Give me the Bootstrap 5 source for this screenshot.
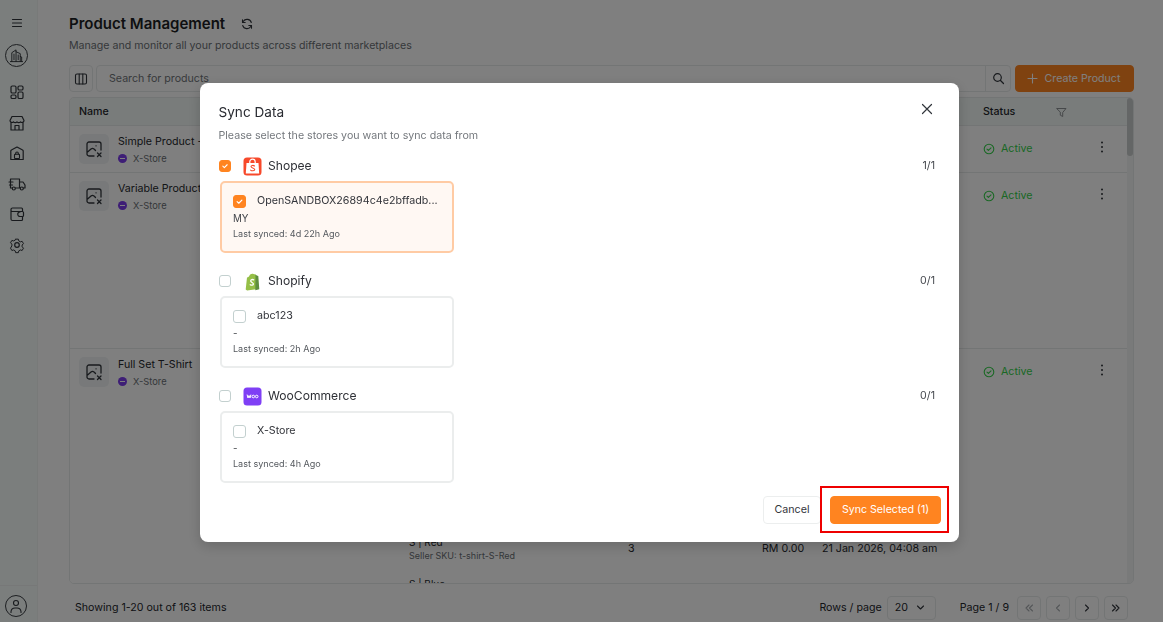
<!DOCTYPE html>
<html lang="en">
<head>
<meta charset="utf-8">
<title>Product Management</title>
<link href="https://cdn.jsdelivr.net/npm/bootstrap@5.3.0/dist/css/bootstrap.min.css" rel="stylesheet">
<style>
html,body{height:100%;overflow:hidden}
body{font-family:Inter,"Liberation Sans",sans-serif;color:#23252b;background:#fff;font-size:10.65px}
.app-shell{height:622px}
.side-rail{width:38px;background:#f6fcfa;border-right:1px solid #f1f4f3;flex:none}
.rail-ham{height:46px;display:flex;align-items:center;justify-content:center;padding-right:4px}
.rail-logo{width:23px;height:23px;border:1px solid #3b3f44;border-radius:50%;margin:-2px 0 0 4.500px;display:flex;align-items:center;justify-content:center}
.rail-list{margin-top:15px;gap:10.600px;align-items:center;padding-right:4px}
.rail-foot{border-top:1px solid #eef1f0;height:37px;padding:9px 0 0 5px}
.rail-user{width:22px;height:22px;border:1px solid #3b3f44;border-radius:50%;display:flex;align-items:center;justify-content:center}
.ico{fill:none;stroke:#31353b;stroke-width:1.6;stroke-linecap:round;stroke-linejoin:round;display:block}
.main-pane{padding:0 29px 0 31px;min-width:0}
.pg-title{font-size:15px;font-weight:600;margin:14px 0 0;line-height:19px;color:#1d1f24}
.pg-sub{font-size:10.640px;color:#6b7075;margin:6px 0 0;line-height:14px}
.tool-row{margin-top:12px;height:27px;gap:3px}
.sq-btn{width:24px;height:27px;border:1px solid #e7eaea;border-radius:4px;background:#fff;padding:0;display:flex;align-items:center;justify-content:center}
.search-wrap{border:1px solid #e7eaea;border-radius:4px;height:27px;flex:1;display:flex;align-items:center;justify-content:space-between;padding-left:12px;color:#6f7479;font-size:10.650px}
.search-end{width:25px;height:25px;border-left:1px solid #e7eaea;display:flex;align-items:center;justify-content:center}
.create-btn{background:#ff8420;border:1px solid #ff8420;color:#fff;border-radius:4px;font-size:10.650px;height:27px;width:119px;margin-left:1px;padding:0 2px 0 0;display:flex;align-items:center;justify-content:center;gap:7px}
.tbl-box{margin-top:5px;height:488px;border:1px solid #e7eaea;border-radius:5px;overflow:hidden;display:flex}
.tbl-scroll{flex:1;min-width:0;overflow:hidden}
.track-bar{width:6px;background:#f2f4f4;flex:none}
.track-thumb{height:58px;background:#c8cccc;border-radius:3px}
.ptbl{table-layout:fixed;width:1058px;margin:0;font-size:10.650px;color:#25272c}
.ptbl th{background:#f2f8f6;font-weight:500;height:27px;padding:2px 9px 0;border-bottom:1px solid #e7eaea;vertical-align:middle;font-size:10.650px}
.ptbl td{padding:8px 9px 0;border-bottom:1px solid #e7eaea;vertical-align:top;background:#fff;white-space:nowrap}
.row-a{height:47px}.row-b{height:176px}
.name-cell{display:flex;gap:9px}
.img-tile{width:30px;height:30px;border-radius:5px;background:#f0f3f4;display:flex;align-items:center;justify-content:center;flex:none}
.name-text{line-height:14px;white-space:nowrap;font-size:10.650px;margin-top:1px}
.store-line{display:flex;align-items:center;gap:6px;color:#6a6f74;font-size:9.300px;margin-top:3px;line-height:14px}
.store-dot{width:9px;height:9px;border-radius:50%;background:#7c3cec;display:flex;align-items:center;justify-content:center}
.store-dot::after{content:"";width:5px;height:1.5px;background:#fff}
.status-line{display:flex;align-items:center;gap:6px;color:#35d14a;font-size:10.650px;line-height:14px;margin-top:8px}
.status-line .ico{stroke:#35d14a}
.ptbl td.kebab-cell{padding:15px 24px 0 0}
.kebab-cell svg{margin:0 0 0 auto}
.ptbl td.var-stack{padding-top:186px;font-size:10px;line-height:14px}
.var-sku{color:#6a6f74;font-size:9px;white-space:nowrap}
.var-gap{margin-top:14px}
.ptbl td.big-cell{padding-top:192px}
.foot-row{height:38px;padding:9px 6px 0;font-size:10.650px}
.foot-sel{width:49px;height:24px;border:1px solid #e7eaea;border-radius:4px;display:flex;align-items:center;justify-content:space-between;padding:0 10px 0 7px;margin:0 24px 0 5px;flex:none}
.pg-btn{width:24px;height:24px;border:1px solid #e7eaea;border-radius:4px;display:flex;align-items:center;justify-content:center}
.pg-btn.off .ico{stroke:#a9adb1}
/* modal */
.sync-dialog{max-width:759px;width:759px;margin:83px 0 0 200px}
.sync-content{border:0;border-radius:8px;height:459px;padding:0 18px 0 18.500px;box-shadow:0 4px 14px rgba(0,0,0,.18);display:block}
.sync-title{font-size:13.600px;font-weight:400;line-height:18px;margin:0;padding-top:20px;color:#282a30}
.sync-sub{font-size:10.650px;color:#74787d;line-height:14px;margin:8px 0 13px}
.close-x{position:absolute;right:26px;top:20px;background:none;border:0;padding:0;width:12px;height:12px}
.mkt-head{height:20px;margin-top:6px;display:flex;align-items:center}
.sync-sub + .mkt-head{margin-top:0}
.mkt-head .tick{margin:0 12px 0 0}
.mkt-name{font-size:12.100px;margin-left:6px;color:#2e3036}
.mkt-count{margin-left:auto;margin-right:6px;font-size:10.650px;color:#46494f}
.tick{appearance:none;width:12.500px;height:12.500px;border:1.500px solid #c3d0cf;border-radius:3px;background:#fff;flex:none;display:block;margin:0}
.tick:checked{background:#ff8420 url("data:image/svg+xml,%3Csvg xmlns='http://www.w3.org/2000/svg' viewBox='0 0 12 12'%3E%3Cpath d='M3.400 6.200l1.800 1.700 3.400-3.400' fill='none' stroke='%23fff' stroke-width='1.300' stroke-linecap='round' stroke-linejoin='round'/%3E%3C/svg%3E") center/100% no-repeat;border-color:#ff8420}
.shop-box{margin:4.500px 0 18.500px 1.500px;width:234px;height:72px;border:2px solid #ebeded;border-radius:5px;padding:12px 12px 0 11px}
.shop-box.on{background:#fff8f3;border-color:#ffcba4}
.shop-top{display:flex;align-items:center;height:14px}
.shop-top .tick{margin-right:11.500px}
.shop-name{font-size:10.700px;color:#33353b;white-space:nowrap}
.shop-region{font-size:9.800px;color:#44474c;line-height:14px;margin-top:3px}
.shop-sync{font-size:9.050px;color:#55595e;line-height:14px;margin-top:1px;white-space:nowrap}
.sync-foot{position:absolute;right:18px;bottom:18px;display:flex;gap:9px;align-items:center}
.cancel-btn{width:58px;height:28px;background:#fff;border:1px solid #eceeee;border-radius:4px;font-size:10.700px;color:#33353b;padding:0}
.go-wrap{position:relative}
.go-btn{width:111px;height:28px;background:#ff8420;border:1px solid #ff8420;color:#fff;border-radius:4px;font-size:10.650px;padding:0;display:block}
.red-mark{position:absolute;left:-10px;right:-8px;top:-10px;bottom:-9px;border:2px solid #ee0000;pointer-events:none}
</style>
</head>
<body>
<div class="app-shell d-flex">
  <aside class="side-rail d-flex flex-column">
    <div class="rail-ham"><svg class="ico" width="12" height="12" viewBox="0 0 12 12"><path d="M1.500 2.500h9M1.500 6h9M1.500 9.500h9" stroke-width="1.100"/></svg></div>
    <div class="rail-logo"><svg class="ico" width="15" height="15" viewBox="0 0 16 16"><path d="M1.500 14.500h13M3 14.500V5l4.500-3v12.500M7.500 4l4.500 2v8.500M12 9l1.500.6v4.900M5.300 6.500v6M9.800 7.500v5" stroke-width="1"/></svg></div>
    <div class="rail-list d-flex flex-column">
      <svg class="ico" width="20" height="20" viewBox="0 0 20 20"><rect x="4" y="4" width="5" height="7" rx="1.300" stroke-width="1.200"/><rect x="11" y="4" width="5" height="4" rx="1.300" stroke-width="1.200"/><rect x="4" y="13" width="5" height="3.500" rx="1.300" stroke-width="1.200"/><rect x="11" y="10" width="5" height="6.500" rx="1.300" stroke-width="1.200"/></svg>
      <svg class="ico" width="20" height="20" viewBox="0 0 20 20"><path d="M5 3.500h10l2 4a2 2 0 0 1-3.500 1.300 2.400 2.400 0 0 1-3.500 0 2.400 2.400 0 0 1-3.500 0A2 2 0 0 1 3 7.500zM4 9.500v7.500h12V9.500M8 17v-4.500h4V17" stroke-width="1.200"/></svg>
      <svg class="ico" width="20" height="20" viewBox="0 0 20 20"><path d="M3.800 16.500V8a1 1 0 0 1 .6-.9L10 4l5.600 3.100a1 1 0 0 1 .6.900v8.500z" stroke-width="1.200"/><rect x="7.500" y="11.300" width="5" height="4.200" rx=".6" stroke-width="1.100"/><path d="M8.700 11.300v-1a1.300 1.300 0 0 1 2.600 0v1" stroke-width="1.100"/></svg>
      <svg class="ico" width="20" height="20" viewBox="0 0 20 20"><path d="M5 14H3.500V5h9v9H8.500M12.500 8H16l2 3v3h-1.500M12.500 14h.5M2 8h4M2.500 11h3" stroke-width="1.200"/><circle cx="6.800" cy="14.500" r="1.500" stroke-width="1.200"/><circle cx="14.800" cy="14.500" r="1.500" stroke-width="1.200"/></svg>
      <svg class="ico" width="20" height="20" viewBox="0 0 20 20"><path d="M15.500 7.500V5a1 1 0 0 0-1-1h-9A1.500 1.500 0 0 0 4 5.500V15a1.500 1.500 0 0 0 1.500 1.500h9a1 1 0 0 0 1-1v-2.500M4 6.500c0 .7.600 1 1.200 1h10.300a1 1 0 0 1 1 1v3a1 1 0 0 1-1 1H13a2 2 0 0 1 0-4.500" stroke-width="1.200"/></svg>
      <svg class="ico" width="20" height="20" viewBox="0 0 20 20"><circle cx="10" cy="10" r="2.300" stroke-width="1.200"/><path d="M8.500 3.500h3l.5 2 1.700 1 2-.6 1.500 2.600-1.500 1.500v2l1.500 1.500-1.500 2.600-2-.6-1.700 1-.5 2h-3l-.5-2-1.700-1-2 .6-1.500-2.600L4.300 11V9L2.800 7.500l1.500-2.600 2 .6 1.700-1z" stroke-width="1.100" transform="translate(1 1) scale(.9)"/></svg>
    </div>
    <div class="rail-foot mt-auto"><div class="rail-user"><svg class="ico" width="16" height="16" viewBox="0 0 16 16"><circle cx="8" cy="5" r="2.500" stroke-width="1.100"/><path d="M3 14.500v-1a4 4 0 0 1 4-3.500h2a4 4 0 0 1 4 3.500v1" stroke-width="1.100"/></svg></div></div>
  </aside>
  <main class="main-pane flex-grow-1 d-flex flex-column">
    <div class="d-flex align-items-center">
      <h1 class="pg-title">Product Management</h1>
      <svg class="ico ms-3 rf-ico" style="margin-top:14px" width="12" height="12" viewBox="0 0 12 12"><path d="M10.300 4.500A4.500 4.500 0 0 0 2.200 3.500L1.500 4.500M1.700 7.500a4.500 4.500 0 0 0 8.100 1l.7-1M1.500 1.800v2.700h2.700M10.500 10.200V7.500H7.800" stroke-width="1.100"/></svg>
    </div>
    <p class="pg-sub">Manage and monitor all your products across different marketplaces</p>
    <div class="tool-row d-flex">
      <div class="sq-btn"><svg class="ico" width="14" height="14" viewBox="0 0 14 14"><rect x="1.500" y="2" width="11" height="10" rx="1.500" stroke-width="1.100"/><path d="M5.200 2v10M8.800 2v10" stroke-width="1.100"/></svg></div>
      <div class="search-wrap"><span>Search for products</span><span class="search-end"><svg class="ico" width="13" height="13" viewBox="0 0 13 13"><circle cx="5.500" cy="5.500" r="3.800" stroke-width="1.200"/><path d="M8.500 8.500l3 3" stroke-width="1.200"/></svg></span></div>
      <button class="create-btn" type="button"><svg class="ico" width="11" height="11" viewBox="0 0 11 11"><path d="M5.500 1v9M1 5.500h9" style="stroke:#fff" stroke-width="1.100"/></svg>Create Product</button>
    </div>
    <div class="tbl-box">
      <div class="tbl-scroll">
        <table class="table ptbl">
          <colgroup><col style="width:330px"><col style="width:219px"><col style="width:134px"><col style="width:60px"><col style="width:161px"><col style="width:118px"><col style="width:36px"></colgroup>
          <thead><tr><th>Name</th><th></th><th></th><th></th><th></th><th><div class="d-flex align-items-center justify-content-between pe-3"><span>Status</span><svg class="ico" width="11" height="11" viewBox="0 0 11 11"><path d="M1 1.500h9L6.700 5.500v4l-2.400-1.300V5.500z" style="stroke:#8d9194" stroke-width="1"/></svg></div></th><th></th></tr></thead>
          <tbody>
            <tr class="row-a"><td><div class="name-cell"><div class="img-tile"><svg class="ico" width="18" height="18" viewBox="0 0 18 18"><path d="M9 16H4a2 2 0 0 1-2-2V4a2 2 0 0 1 2-2h10a2 2 0 0 1 2 2v6M2 12.500L6 9c1.500-1.200 3-.5 4.500 1.500M11 5.800h.1M12.500 13l3.500 3.500M16 13l-3.500 3.500" stroke-width="1.300"/></svg></div><div><div class="name-text">Simple Product -</div><div class="store-line"><span class="store-dot"></span>X-Store</div></div></div></td><td></td><td></td><td></td><td></td><td><div class="status-line"><svg class="ico" width="12" height="12" viewBox="0 0 12 12"><circle cx="6" cy="6" r="4.800" stroke-width="1.100"/><path d="M4 6.100l1.400 1.300L8 4.800" stroke-width="1.100"/></svg>Active</div></td><td class="kebab-cell"><svg class="ico" width="4" height="12" viewBox="0 0 4 12"><path d="M2 1.500h.01M2 6h.01M2 10.500h.01" stroke-width="2"/></svg></td></tr>
            <tr class="row-b"><td><div class="name-cell"><div class="img-tile"><svg class="ico" width="18" height="18" viewBox="0 0 18 18"><path d="M9 16H4a2 2 0 0 1-2-2V4a2 2 0 0 1 2-2h10a2 2 0 0 1 2 2v6M2 12.500L6 9c1.500-1.200 3-.5 4.500 1.500M11 5.800h.1M12.500 13l3.500 3.500M16 13l-3.500 3.500" stroke-width="1.300"/></svg></div><div><div class="name-text">Variable Product</div><div class="store-line"><span class="store-dot"></span>X-Store</div></div></div></td><td></td><td></td><td></td><td></td><td><div class="status-line"><svg class="ico" width="12" height="12" viewBox="0 0 12 12"><circle cx="6" cy="6" r="4.800" stroke-width="1.100"/><path d="M4 6.100l1.400 1.300L8 4.800" stroke-width="1.100"/></svg>Active</div></td><td class="kebab-cell"><svg class="ico" width="4" height="12" viewBox="0 0 4 12"><path d="M2 1.500h.01M2 6h.01M2 10.500h.01" stroke-width="2"/></svg></td></tr>
            <tr><td><div class="name-cell"><div class="img-tile"><svg class="ico" width="18" height="18" viewBox="0 0 18 18"><path d="M9 16H4a2 2 0 0 1-2-2V4a2 2 0 0 1 2-2h10a2 2 0 0 1 2 2v6M2 12.500L6 9c1.500-1.200 3-.5 4.500 1.500M11 5.800h.1M12.500 13l3.500 3.500M16 13l-3.500 3.500" stroke-width="1.300"/></svg></div><div><div class="name-text">Full Set T-Shirt</div><div class="store-line"><span class="store-dot"></span>X-Store</div></div></div></td><td class="var-stack"><div>S | Red</div><div class="var-sku">Seller SKU: t-shirt-S-Red</div><div class="var-gap">S | Blue</div></td><td class="big-cell">3</td><td class="big-cell">RM 0.00</td><td class="big-cell">21 Jan 2026, 04:08 am</td><td><div class="status-line"><svg class="ico" width="12" height="12" viewBox="0 0 12 12"><circle cx="6" cy="6" r="4.800" stroke-width="1.100"/><path d="M4 6.100l1.400 1.300L8 4.800" stroke-width="1.100"/></svg>Active</div></td><td class="kebab-cell"><svg class="ico" width="4" height="12" viewBox="0 0 4 12"><path d="M2 1.500h.01M2 6h.01M2 10.500h.01" stroke-width="2"/></svg></td></tr>
          </tbody>
        </table>
      </div>
      <div class="track-bar"><div class="track-thumb"></div></div>
    </div>
    <div class="foot-row d-flex align-items-center">
      <span>Showing 1-20 out of 163 items</span>
      <div class="ms-auto d-flex align-items-center">
        <span>Rows / page</span>
        <div class="foot-sel"><span>20</span><svg class="ico" width="9" height="9" viewBox="0 0 9 9"><path d="M1.500 3l3 3 3-3" stroke-width="1.100"/></svg></div>
        <span class="me-2">Page 1 / 9</span>
        <div class="d-flex" style="gap:5px">
          <div class="pg-btn off"><svg class="ico" width="10" height="10" viewBox="0 0 10 10"><path d="M5 2L2 5l3 3M8.500 2l-3 3 3 3" stroke-width="1.100"/></svg></div>
          <div class="pg-btn off"><svg class="ico" width="10" height="10" viewBox="0 0 10 10"><path d="M6.500 2l-3 3 3 3" stroke-width="1.100"/></svg></div>
          <div class="pg-btn"><svg class="ico" width="10" height="10" viewBox="0 0 10 10"><path d="M3.500 2l3 3-3 3" stroke-width="1.100"/></svg></div>
          <div class="pg-btn"><svg class="ico" width="10" height="10" viewBox="0 0 10 10"><path d="M1.500 2l3 3-3 3M5 2l3 3-3 3" stroke-width="1.100"/></svg></div>
        </div>
      </div>
    </div>
  </main>
</div>

<div class="modal-backdrop show"></div>
<div class="modal d-block" tabindex="-1" role="dialog">
  <div class="modal-dialog sync-dialog">
    <div class="modal-content sync-content">
      <h2 class="sync-title">Sync Data</h2>
      <button class="close-x" type="button" aria-label="Close"><svg class="ico" width="12" height="12" viewBox="0 0 12 12"><path d="M1.500 1.500l9 9M10.500 1.500l-9 9" stroke-width="1.200"/></svg></button>
      <p class="sync-sub">Please select the stores you want to sync data from</p>

      <div class="mkt-head"><input class="tick" type="checkbox" checked aria-label="Shopee">
        <svg width="19" height="19" viewBox="0 0 19 19"><rect x=".5" y=".5" width="18" height="18" rx="3.500" fill="#f7492b"/><path d="M3.500 6h12l.7 10.500H2.800z" fill="#fff"/><path d="M6.800 6.200V4.800a2.700 2.700 0 0 1 5.400 0v1.400" fill="none" stroke="#fff" stroke-width="1.200"/><path d="M11.500 9c-.8-.8-3.500-.9-3.500.6 0 1.700 3.700 1 3.700 3 0 1.500-3 1.500-4.100.5" fill="none" stroke="#f7492b" stroke-width="1.100" stroke-linecap="round"/></svg>
        <span class="mkt-name">Shopee</span><span class="mkt-count">1/1</span></div>
      <div class="shop-box on">
        <div class="shop-top"><input class="tick" type="checkbox" checked aria-label="OpenSANDBOX"><span class="shop-name">OpenSANDBOX26894c4e2bffadb...</span></div>
        <div class="shop-region">MY</div>
        <div class="shop-sync">Last synced: 4d 22h Ago</div>
      </div>

      <div class="mkt-head"><input class="tick" type="checkbox" aria-label="Shopify">
        <svg width="19" height="19" viewBox="0 0 19 19"><path d="M4 5.500c1.500-.4 2-1 2.500-2 .6-1.300 2.400-2.300 4-1.500l2 .6 1.200 1.400 1.300 13-10.900 1.500-1.400-1z" fill="#95bf47"/><path d="M12.500 2.600l1.200 1 1.600.3 1 13.400-4 .9z" fill="#5e8e3e"/><path d="M10.700 7.800c-1.300-.6-3-.2-3 1.200s2.700 1.500 2.700 3c0 1.400-1.800 1.500-3.200.7" fill="none" stroke="#fff" stroke-width="1.300" stroke-linecap="round"/></svg>
        <span class="mkt-name">Shopify</span><span class="mkt-count">0/1</span></div>
      <div class="shop-box">
        <div class="shop-top"><input class="tick" type="checkbox" aria-label="abc123"><span class="shop-name">abc123</span></div>
        <div class="shop-region">-</div>
        <div class="shop-sync">Last synced: 2h Ago</div>
      </div>

      <div class="mkt-head"><input class="tick" type="checkbox" aria-label="WooCommerce">
        <svg width="19" height="19" viewBox="0 0 19 19"><rect x=".5" y=".5" width="18" height="18" rx="3.500" fill="#7f3ff5"/><path d="M4.200 8l.8 3 1-2.500 1 2.500.8-3" fill="none" stroke="#fff" stroke-width="1" stroke-linecap="round" stroke-linejoin="round"/><circle cx="10.300" cy="9.500" r="1.300" fill="none" stroke="#fff" stroke-width="1"/><circle cx="13.700" cy="9.500" r="1.300" fill="none" stroke="#fff" stroke-width="1"/></svg>
        <span class="mkt-name">WooCommerce</span><span class="mkt-count">0/1</span></div>
      <div class="shop-box">
        <div class="shop-top"><input class="tick" type="checkbox" aria-label="X-Store"><span class="shop-name">X-Store</span></div>
        <div class="shop-region">-</div>
        <div class="shop-sync">Last synced: 4h Ago</div>
      </div>

      <div class="sync-foot">
        <button class="cancel-btn" type="button">Cancel</button>
        <div class="go-wrap"><button class="go-btn" type="button">Sync Selected (1)</button><span class="red-mark"></span></div>
      </div>
    </div>
  </div>
</div>
<script src="https://cdn.jsdelivr.net/npm/bootstrap@5.3.0/dist/js/bootstrap.bundle.min.js"></script>
</body>
</html>
